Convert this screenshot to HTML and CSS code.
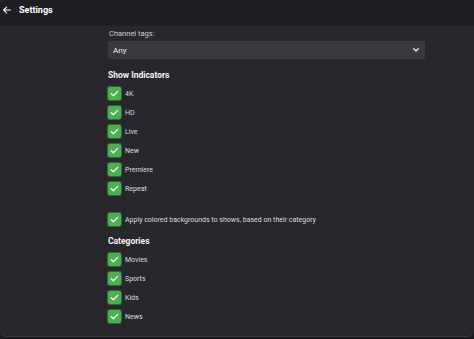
FILE: index.html
```html
<!DOCTYPE html>
<html lang="en">
<head>
  <meta charset="UTF-8">
  <meta name="viewport" content="width=device-width, initial-scale=1">
  <title>Settings</title>
  <link rel="stylesheet" href="styles.css">
</head>
<body>
  <header class="topbar">
    <svg class="back" viewBox="0 0 24 24" width="10" height="10"><path d="M20 12H5M11 5l-7 7 7 7" fill="none" stroke="#fff" stroke-width="2.6" stroke-linecap="round" stroke-linejoin="round"/></svg>
    <span class="title">Settings</span>
  </header>

  <main class="panel">
    <div class="settings">
      <label class="field-label">Channel tags:</label>
      <div class="select">
        <span>Any</span>
        <svg viewBox="0 0 24 24" width="8" height="8"><path d="M5 8l7 7 7-7" fill="none" stroke="#fff" stroke-width="3.5" stroke-linecap="round" stroke-linejoin="round"/></svg>
      </div>

      <h2>Show Indicators</h2>
      <ul class="checks">
        <li><span class="box"></span>4K</li>
        <li><span class="box"></span>HD</li>
        <li><span class="box"></span>Live</li>
        <li><span class="box"></span>New</li>
        <li><span class="box"></span>Premiere</li>
        <li><span class="box"></span>Repeat</li>
      </ul>

      <ul class="checks single">
        <li><span class="box"></span>Apply colored backgrounds to shows, based on their category</li>
      </ul>

      <h2 class="cat">Categories</h2>
      <ul class="checks">
        <li><span class="box"></span>Movies</li>
        <li><span class="box"></span>Sports</li>
        <li><span class="box"></span>Kids</li>
        <li><span class="box"></span>News</li>
      </ul>
    </div>
  </main>
</body>
</html>
```

FILE: styles.css
```css
body {
  margin: 0;
  font-family: Roboto, 'Liberation Sans', sans-serif;
  background: #1c1b1f;
  color: #e4e3e8;
  height: 339px;
  overflow: hidden;
}
.topbar {
  height: 26px;
  background: #1f1e22;
  display: flex;
  align-items: center;
  padding-left: 2px;
  gap: 7px;
  box-sizing: border-box;
  padding-bottom: 6px;
}
.topbar .title {
  color: #fff;
  font-weight: 700;
  font-size: 9px;
}
.panel {
  background: #28272c;
  height: 311px;
  border-radius: 0 0 6px 6px;
  border-bottom: 1px solid #3a393e;
  box-sizing: border-box;
}
.settings {
  margin-left: 108px;
  width: 317px;
  padding-top: 3px;
}
.field-label {
  display: block;
  font-size: 7.5px;
  color: #cfcdd3;
  margin-left: 1px;
  margin-bottom: 3px;
}
.select {
  height: 18px;
  background: #3a393e;
  border-radius: 2px;
  display: flex;
  align-items: center;
  justify-content: space-between;
  padding: 0 5px 0 5px;
  font-size: 8px;
  color: #eceaef;
}
h2 {
  font-size: 8.5px;
  font-weight: 700;
  color: #f2f1f4;
  margin: 11px 0 4px;
}
h2.cat {
  margin-top: 7px;
  margin-bottom: 4px;
}
.checks {
  list-style: none;
  margin: 0;
  padding: 0;
}
.checks li {
  display: flex;
  align-items: center;
  gap: 4px;
  height: 19px;
  font-size: 7px;
  color: #dddce1;
}
.checks.single {
  margin-top: 12px;
}
.box {
  width: 13px;
  height: 13px;
  border-radius: 2px;
  background: #4caf50 url("data:image/svg+xml;utf8,<svg xmlns='http://www.w3.org/2000/svg' viewBox='0 0 24 24'><path d='M5 12.5l4.5 4.5L19 7.5' fill='none' stroke='white' stroke-width='2.6' stroke-linecap='round' stroke-linejoin='round'/></svg>") center / 11px no-repeat;
  box-shadow: 0 0 0 1px #2e6b31;
}
```
